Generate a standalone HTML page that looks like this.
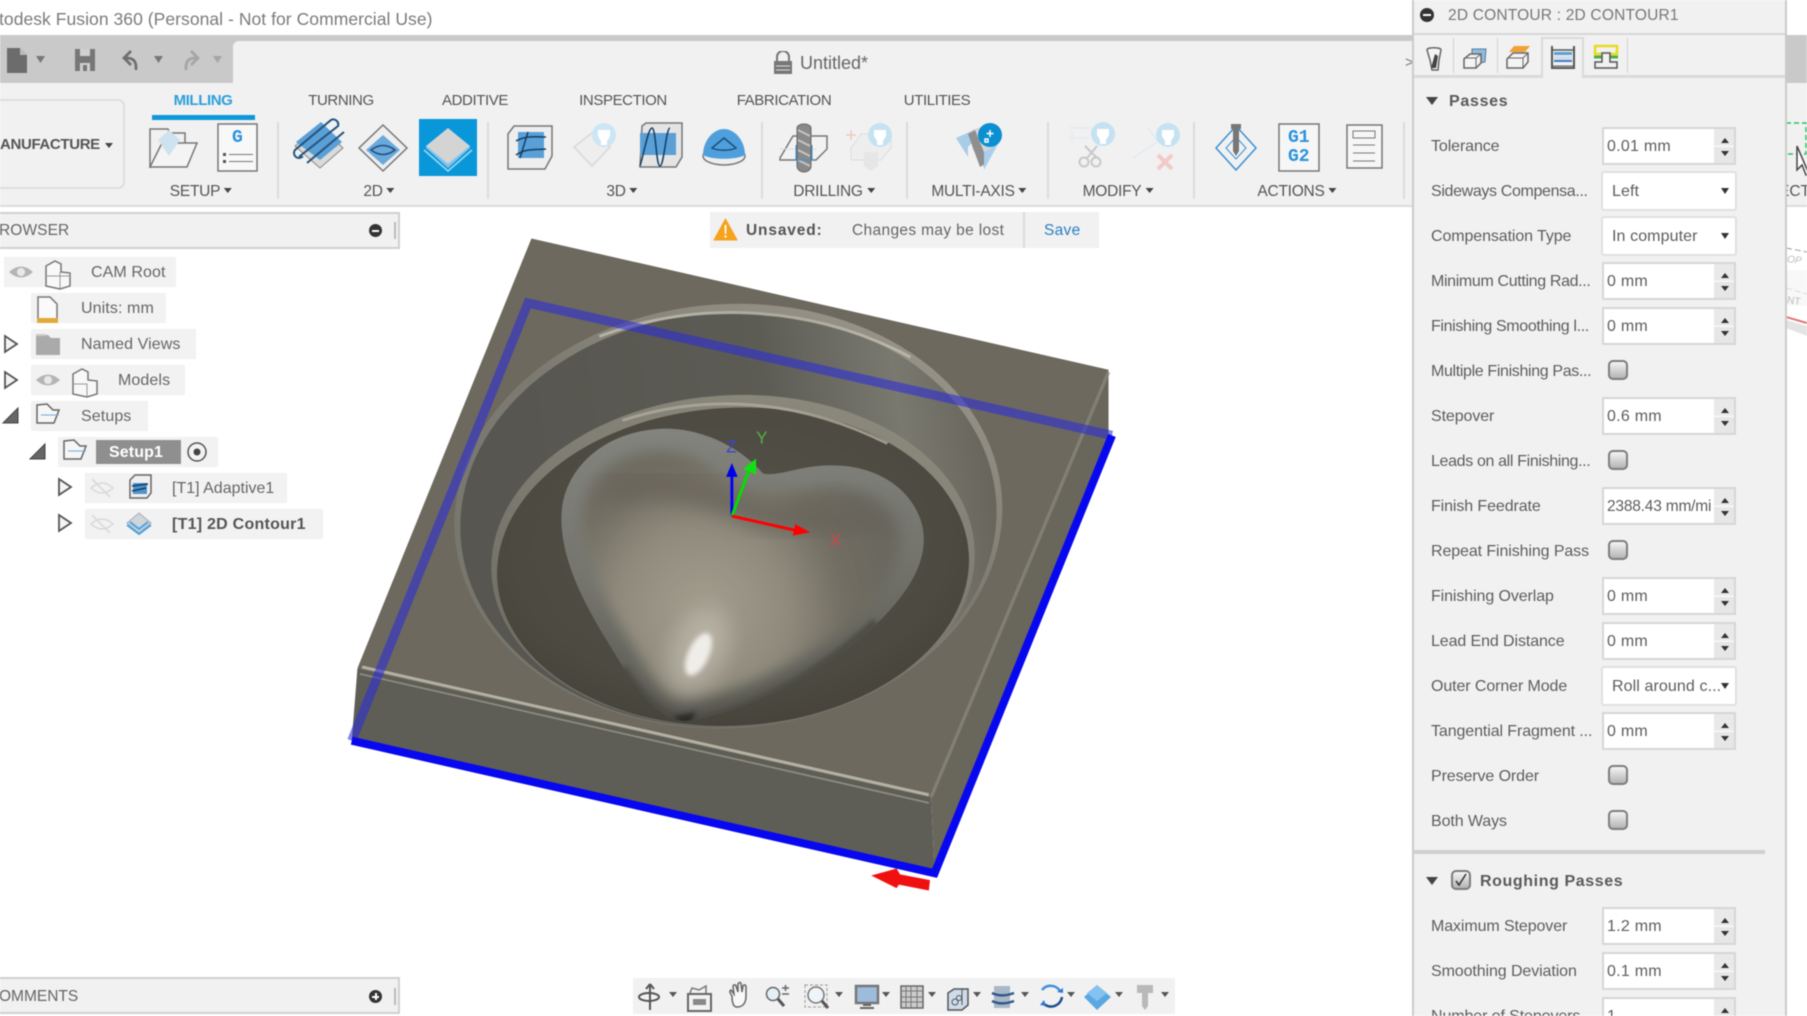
<!DOCTYPE html>
<html><head><meta charset="utf-8"><title>Fusion 360</title>
<style>
html,body{margin:0;padding:0;background:#fff}
#r{position:relative;width:1807px;height:1016px;overflow:hidden;background:#fff;font-family:"Liberation Sans",sans-serif;color:#555;filter:blur(.45px)}
#r div,#r span,#r svg{position:absolute}
.t{white-space:nowrap;line-height:20px}
.tab{top:91px;font-size:15px;letter-spacing:-.4px;color:#555;white-space:nowrap;line-height:20px;transform:translateX(-50%)}
.grp{top:182px;font-size:15.5px;letter-spacing:-.25px;color:#555;white-space:nowrap;line-height:20px;transform:translateX(-50%)}
.grp:after{content:"";display:inline-block;border:4px solid transparent;border-top:5px solid #444;border-bottom:0;margin-left:4px;vertical-align:3px}
.sep{width:2px;top:122px;height:77px;background:#dcdcdc}
.l{left:1431px;font-size:16px;color:#5d5d5d;white-space:nowrap;line-height:20px;letter-spacing:-.1px}
.n{letter-spacing:-.35px}
.i{left:1602px;width:134px;height:38px;box-sizing:border-box;border:2px solid #d6d6d6;background:#fff;font-size:16px;line-height:35px;color:#5d5d5d;padding-left:3px;white-space:nowrap;overflow:hidden;letter-spacing:.25px}
.i b{position:absolute;right:0;top:0;width:20px;height:34px;background:linear-gradient(#e9e9e9 49%,#f8f8f8 49%,#f8f8f8 53%,#e6e6e6 53%)}
.i b:before{content:"";position:absolute;left:7px;top:9px;border:4px solid transparent;border-bottom:5px solid #333;border-top:0}
.i b:after{content:"";position:absolute;left:7px;top:22px;border:4px solid transparent;border-top:5px solid #333;border-bottom:0}
.s{left:1601px;width:136px;height:40px;box-sizing:border-box;border:2px solid #e0e0e0;border-radius:3px;background:#fff;font-size:16px;line-height:37px;color:#5d5d5d;padding-left:9px;white-space:nowrap;letter-spacing:.1px}
.s:after{content:"";position:absolute;right:6px;top:15px;border:4.5px solid transparent;border-top:6px solid #333;border-bottom:0}
.c{left:1608px;width:20px;height:20px;box-sizing:border-box;border:2px solid #7d7d7d;border-radius:5px;background:linear-gradient(#f4f4f4,#b4b4b4)}
.row{height:30px;background:#f2f2f2}
.tt{font-size:16px;color:#666;line-height:20px;white-space:nowrap;letter-spacing:.1px}
.a{width:0;height:0;border:5px solid transparent;border-top:7px solid #666;border-bottom:0}
</style></head><body><div id="r">

<!-- title -->
<div class="t" style="left:-1px;top:9px;font-size:17.5px;color:#7b7b7b;letter-spacing:.05px">todesk Fusion 360 (Personal - Not for Commercial Use)</div>
<div style="left:0;top:35px;width:1807px;height:48px;background:#c9c9c9"></div>
<div style="left:233px;top:41px;width:1180px;height:42px;background:#f1f1f1;border-radius:6px 0 0 0"></div>
<div style="left:0;top:83px;width:1807px;height:122px;background:#f1f1f1"></div>
<div style="left:0;top:205px;width:1807px;height:2px;background:#dcdcdc"></div>

<!-- quick access -->
<svg style="left:0;top:42px" width="234" height="40" viewBox="0 0 234 40">
<path d="M7 6h13l7 7v18H7z" fill="#6c6c6c"/><path d="M20 6v7h7" fill="#bbb"/>
<path d="M36 14h9l-4.500 7z" fill="#777"/>
<path d="M75 7h20v22H75z" fill="#777"/><path d="M80 7h10v7H80zM80 21h10v8H80z" fill="#d0d0d0"/><path d="M83 23h4v6h-4z" fill="#777"/>
<path d="M136 28v-3c0-7-4-9-10-9m5-7-7 7 7 7" fill="none" stroke="#707070" stroke-width="2.800"/>
<path d="M154 14h9l-4.500 7z" fill="#777"/>
<path d="M186 28v-3c0-7 4-9 10-9m-5-7 7 7-7 7" fill="none" stroke="#a5a5a5" stroke-width="2.800"/>
<path d="M213 14h9l-4.500 7z" fill="#a5a5a5"/></svg>

<svg style="left:772px;top:51px" width="22" height="24" viewBox="0 0 22 24"><path d="M5 10V6a6 6 0 0 1 12 0v4" fill="none" stroke="#777" stroke-width="2"/><path d="M2 10h18v13H2z" fill="#777"/><path d="M4 15h14M4 19h14" stroke="#ddd"/></svg>
<div class="t" style="left:800px;top:53px;font-size:18px;color:#666">Untitled*</div>
<div class="t" style="left:1405px;top:53px;font-size:15px;color:#777">&gt;</div>

<!-- manufacture -->
<div style="left:-10px;top:99px;width:135px;height:90px;border:2px solid #dedede;border-radius:7px;box-sizing:border-box"></div>
<div class="t" style="left:0;top:135px;font-size:15px;font-weight:bold;color:#555;letter-spacing:-.35px">ANUFACTURE</div>
<div style="left:105px;top:143px;border:4px solid transparent;border-top:5px solid #444;border-bottom:0;width:0;height:0"></div>

<!-- tabs -->
<div class="tab" style="left:203px;color:#2d9fdb;font-weight:bold">MILLING</div>
<div style="left:152px;top:115px;width:103px;height:5px;background:#0d98da"></div>
<div class="tab" style="left:341px">TURNING</div>
<div class="tab" style="left:475px">ADDITIVE</div>
<div class="tab" style="left:623px">INSPECTION</div>
<div class="tab" style="left:784px">FABRICATION</div>
<div class="tab" style="left:937px">UTILITIES</div>

<div class="sep" style="left:277px"></div><div class="sep" style="left:487px"></div><div class="sep" style="left:761px"></div><div class="sep" style="left:906px"></div><div class="sep" style="left:1047px"></div><div class="sep" style="left:1193px"></div><div class="sep" style="left:1403px"></div>

<div style="left:419px;top:119px;width:58px;height:57px;background:#0a97d9"></div>

<!-- toolbar icons -->
<svg style="left:0;top:110px" width="1410" height="75" viewBox="0 110 1410 75" fill="none">
<!-- folder -->
<path d="M150 168v-39h18l2 4h15v12" stroke="#777" stroke-width="1.500"/><path d="M150 167l12-24h35l-10 24z" stroke="#777" stroke-width="1.500" fill="#f4f4f4"/><path d="M158 140l11-10 11 10-11 16z" fill="#cfe2ef"/>
<!-- G doc -->
<path d="M218 124h39v47h-39z" stroke="#777" stroke-width="1.500" fill="#f8f8f8"/><path d="M223 153h3v3h-3zM223 160h3v3h-3z" fill="#555"/><path d="M229 154.500h24M229 161.500h24" stroke="#777"/>
<!-- adaptive -->
<path d="M295 146l25-20 23 22-23 20z" fill="#dadada" stroke="#888"/><path d="M296 142l25-20 21 20-22 18z" fill="#5a9fd6"/><path d="M300 156l38-30a5 5 0 0 0-7-6l-36 30a5 5 0 0 0 7 7zM307 163l37-31" stroke="#24547e" stroke-width="2"/>
<!-- pocket -->
<path d="M383 125l24 23-24 23-24-23z" fill="#eee" stroke="#777" stroke-width="1.500"/><path d="M383 135l17 15-17 15-17-15z" fill="#6aa9dc"/><path d="M371 150q12-9 24 0q-12 9-24 0z" stroke="#1f4e7a" stroke-width="1.500"/>
<!-- active contour -->
<path d="M424 150l24 21 24-21" stroke="#9fd8f6" stroke-width="1.500"/><path d="M426 146l22 18 22-18v2l-22 20-22-20z" fill="#79c6ef"/><path d="M448 128l22 18-22 18-22-18z" fill="#d4d4d4"/>
<!-- 3d adaptive -->
<path d="M508 134l6-8h38v30l-7 13h-37z" fill="#eee" stroke="#777" stroke-width="1.500"/><path d="M518 132h26v26h-26z" fill="#5a9fd6"/><path d="M516 141c10-6 22-4 30-4M516 155c10-7 20-5 30-6M528 132l-8 26" stroke="#123f66" stroke-width="1.500"/>
<!-- ghost -->
<path d="M574 147l18-14 18 14-18 19z" fill="#eee" stroke="#ddd" stroke-width="2"/><circle cx="604" cy="135" r="12" fill="#cde6f5"/><path d="M598 130h12v6l-3 5v4h-6v-4l-3-5z" fill="#fff"/>
<!-- 3d parallel -->
<path d="M642 126l4-3h36v34l-6 10h-36z" fill="#e4e4e4" stroke="#777" stroke-width="1.500"/><path d="M640 133h36v22h-36z" fill="#5a9fd6"/><path d="M640 166c4-12 8-38 12-38s4 38 8 38 6-38 10-38" stroke="#123f66" stroke-width="1.500"/>
<!-- 3d cone -->
<ellipse cx="724" cy="156" rx="21" ry="9" fill="#eee" stroke="#777" stroke-width="1.500"/><path d="M703 155c0-14 10-26 21-26s21 12 21 26c-8 5-34 5-42 0z" fill="#4f9fdc"/><path d="M712 148l12-10 12 10c-6 3-18 3-24 0z" stroke="#17507f" stroke-width="1.500"/>
<!-- drilling -->
<path d="M780 158l13-22h34v13l-11 11h-36z" fill="#f2f2f2" stroke="#777" stroke-width="1.500"/><path d="M780 149h36" stroke="#ddd"/><path d="M797 128a7 4 0 0 1 14 0v38a7 6 0 0 1-14 0z" fill="#8a8a8a" stroke="#666"/>
<path d="M798 130l12 6M798 140l12 6M798 150l12 6M798 160l12 6" stroke="#c4c4c4" stroke-width="2"/><path d="M796 145v15h16v-15" stroke="#3a91d5"/>
<!-- ghost drill -->
<path d="M851 148l10-14h30v14l-10 12h-30z" fill="#eee" stroke="#ddd"/><path d="M851 130v10M846 135h10" stroke="#f0c8c4" stroke-width="1.500"/><path d="M864 152h14v14l-7 5-7-5z" fill="#e6e6e6"/><circle cx="880" cy="135" r="12" fill="#c5e2f3"/><path d="M874 130h12v6l-3 5v4h-6v-4l-3-5z" fill="#fff"/>
<!-- multi axis -->
<path d="M956 138l20-9v10l-8 8v10z" fill="#a8cde8"/><path d="M972 130l12-4 12 20-12 22-12-20z" fill="#d6d6d6"/><path d="M968 134l7-4 13 32-8 5z" fill="#8f8f8f"/><path d="M984 152l14-8-14 26z" fill="#a9cfee"/><circle cx="990" cy="135" r="12" fill="#0a8fd3"/><path d="M990 130v7M986.500 133.500h7M985 139h3v3h-3z" stroke="#fff" stroke-width="1.500"/>
<!-- modify -->
<path d="M1069 128h28M1069 138h20M1072 132v10" stroke="#e0e8ee"/><path d="M1085 146l12 12M1097 146l-10 12" stroke="#c8c8c8" stroke-width="2"/><circle cx="1084" cy="162" r="4.500" stroke="#c8c8c8" stroke-width="2"/><circle cx="1096" cy="162" r="4.500" stroke="#c8c8c8" stroke-width="2"/><circle cx="1103" cy="134" r="12" fill="#c5e2f3"/><path d="M1097 129h12v6l-3 5v4h-6v-4l-3-5z" fill="#fff"/>
<path d="M1133 158l30-20M1148 128l10 14" stroke="#d8e8f2"/><path d="M1158 155l14 14M1172 155l-14 14" stroke="#f2c9c6" stroke-width="4"/><circle cx="1168" cy="135" r="12" fill="#c5e2f3"/><path d="M1162 130h12v6l-3 5v4h-6v-4l-3-5z" fill="#fff"/>
<!-- actions -->
<path d="M1236 126l20 22-20 22-20-22z" stroke="#3a91d5" stroke-width="1.500"/><path d="M1236 137l10 11-10 11-10-11z" stroke="#3a91d5"/><path d="M1231 124h10v5h-2v22l-3 5-3-5v-22h-2z" fill="#777"/>
<path d="M1279 124h40v47h-40z" fill="#f6f6f6" stroke="#777" stroke-width="1.500"/>
<path d="M1347 125h35v43h-35z" fill="#f6f6f6" stroke="#777" stroke-width="1.500"/><path d="M1353 131h22v7h-22zM1353 145h22M1353 153h22M1353 161h22" stroke="#777"/>
</svg>
<div class="t" style="left:232px;top:128px;font-size:18px;font-weight:bold;color:#2b93db;font-family:'Liberation Mono',monospace">G</div>
<div class="t" style="left:1288px;top:129px;font-size:18px;font-weight:bold;color:#2b93db;line-height:19px;font-family:'Liberation Mono',monospace;white-space:normal;width:24px">G1 G2</div>

<div class="grp" style="left:201px">SETUP</div>
<div class="grp" style="left:379px">2D</div>
<div class="grp" style="left:622px">3D</div>
<div class="grp" style="left:834px">DRILLING</div>
<div class="grp" style="left:979px">MULTI-AXIS</div>
<div class="grp" style="left:1118px">MODIFY</div>
<div class="grp" style="left:1297px">ACTIONS</div>

<!-- browser -->
<div style="left:-2px;top:212px;width:402px;height:37px;background:#f1f1f1;border:2px solid #d0d0d0;box-sizing:border-box"></div>
<div class="t" style="left:-1px;top:221px;font-size:15.5px;color:#666;letter-spacing:.1px">ROWSER</div>
<div style="left:369px;top:224px;width:13px;height:13px;border-radius:50%;background:#333"></div><div style="left:372px;top:230px;width:7px;height:2px;background:#fff"></div>
<div style="left:394px;top:222px;width:2px;height:17px;background:#bbb"></div>

<!-- tree -->
<div class="row" style="left:4px;top:257px;width:172px"></div>
<div class="row" style="left:31px;top:293px;width:135px"></div>
<div class="row" style="left:31px;top:329px;width:165px"></div>
<div class="row" style="left:31px;top:365px;width:154px"></div>
<div class="row" style="left:31px;top:401px;width:117px"></div>
<div class="row" style="left:58px;top:437px;width:160px"></div>
<div class="row" style="left:85px;top:473px;width:202px"></div>
<div class="row" style="left:85px;top:509px;width:238px"></div>
<div style="left:96px;top:440px;width:85px;height:24px;background:#8f8f8f"></div>

<svg style="left:0;top:250px" width="330" height="290" viewBox="0 250 330 290" fill="none">
<path d="M9 272q12-11 24 0q-12 11-24 0z" fill="#b5b5b5"/><circle cx="21" cy="272" r="4" fill="#e8e8e8"/>
<path id="b1" d="M46 266l9-5 6 3v8l9 1v13l-10 3-14-3z" stroke="#777" stroke-width="1.500" fill="#f8f8f8"/><path d="M46 276h14v12M60 272v4l10 0" stroke="#999"/>
<path d="M38 297h12l7 7v17H38z" stroke="#777" stroke-width="1.500" fill="#fafafa"/><path d="M37 318h21v5H37z" fill="#e2a93a"/>
<path d="M36 335h12l3 3h9v17H36z" fill="#aaa"/><path d="M36 334h10v2H36z" fill="#ccc"/>
<path d="M5 336l12 8-12 8z" stroke="#555" stroke-width="1.800" fill="#f4f4f4"/>
<path d="M5 372l12 8-12 8z" stroke="#555" stroke-width="1.800" fill="#f4f4f4"/>
<path d="M36 380q12-11 24 0q-12 11-24 0z" fill="#b5b5b5"/><circle cx="48" cy="380" r="4" fill="#e8e8e8"/>
<path d="M73 374l9-5 6 3v8l9 1v13l-10 3-14-3z" stroke="#777" stroke-width="1.500" fill="#f8f8f8"/><path d="M73 384h14v12" stroke="#999"/>
<path d="M3 423l15-15v15z" fill="#666" stroke="#444"/>
<path d="M37 405l10-1 6 6h6l-5 13H37z" stroke="#666" stroke-width="1.500" fill="#f6f6f6"/><path d="M41 415h18" stroke="#77a9d6"/>
<path d="M30 459l15-15v15z" fill="#666" stroke="#444"/>
<path d="M64 441l10-1 6 6h6l-5 13H64z" stroke="#666" stroke-width="1.500" fill="#f6f6f6"/><path d="M68 451h18" stroke="#77a9d6"/>
<circle cx="197" cy="452" r="9" stroke="#555" stroke-width="1.500"/><circle cx="197" cy="452" r="3.500" fill="#444"/>
<path d="M59 479l12 8-12 8z" stroke="#555" stroke-width="1.800" fill="#f4f4f4"/>
<path d="M59 515l12 8-12 8z" stroke="#555" stroke-width="1.800" fill="#f4f4f4"/>
<path d="M91 488q11-10 22 0q-11 10-22 0zM92 479l18 18" stroke="#d8d8d8" stroke-width="1.500"/>
<path d="M91 524q11-10 22 0q-11 10-22 0zM92 515l18 18" stroke="#d8d8d8" stroke-width="1.500"/>
<path d="M130 480l5-5h16v18l-4 5h-17z" stroke="#666" stroke-width="1.500" fill="#f0f0f0"/><path d="M133 483h14v11h-14z" fill="#4f94cc"/><path d="M132 486l16-2M132 491l14-3" stroke="#123f66" stroke-width="1.500"/>
<path d="M139 513l12 10-12 10-12-10z" fill="#cfd6da" stroke="#aab"/><path d="M127 525l12 9 12-9" stroke="#49a3e0" stroke-width="2"/><path d="M130 522l9 7 9-7" stroke="#49a3e0" stroke-width="2"/>
</svg>
<div class="tt" style="left:91px;top:263px">CAM Root</div>
<div class="tt" style="left:81px;top:299px">Units: mm</div>
<div class="tt" style="left:81px;top:335px">Named Views</div>
<div class="tt" style="left:118px;top:371px">Models</div>
<div class="tt" style="left:81px;top:407px">Setups</div>
<div class="tt" style="left:109px;top:443px;color:#fff;font-weight:bold">Setup1</div>
<div class="tt" style="left:172px;top:479px;letter-spacing:0">[T1] Adaptive1</div>
<div class="tt" style="left:172px;top:515px;font-weight:bold;color:#555;letter-spacing:.25px">[T1] 2D Contour1</div>

<!-- unsaved -->
<div style="left:710px;top:212px;width:389px;height:36px;background:#f1f1f1"></div>
<svg style="left:713px;top:217px" width="25" height="25" viewBox="0 0 25 25"><path d="M12.500 2L24 23H1z" fill="#f5a31d" stroke="#f5a31d" stroke-linejoin="round"/><path d="M11.500 8h2l-.3 9h-1.400zM11.500 18.500h2v2h-2z" fill="#fff"/></svg>
<div class="t" style="left:746px;top:221px;font-size:15.5px;font-weight:bold;color:#555;letter-spacing:.85px">Unsaved:</div>
<div class="t" style="left:852px;top:221px;font-size:15.5px;color:#666;letter-spacing:.35px">Changes may be lost</div>
<div style="left:1023px;top:212px;width:2px;height:36px;background:#dcdcdc"></div>
<div class="t" style="left:1044px;top:221px;font-size:15.5px;color:#2b7fbf;letter-spacing:.3px">Save</div>

<!-- model -->
<svg style="left:0;top:0" width="1807" height="1016" viewBox="0 0 1568 882">
<defs>
<linearGradient id="wall" x1="0.1" y1="0.4" x2="1" y2="0.35"><stop offset="0" stop-color="#575650"/><stop offset=".55" stop-color="#5c5c55"/><stop offset=".82" stop-color="#7a7970"/><stop offset="1" stop-color="#66645b"/></linearGradient>
<linearGradient id="rim" x1="0.1" y1="0.8" x2="0.75" y2="0"><stop offset="0" stop-color="#77766c"/><stop offset=".55" stop-color="#7d7b71"/><stop offset="1" stop-color="#98948a"/></linearGradient>
<linearGradient id="led" x1="0" y1="1" x2="0.6" y2="0"><stop offset="0" stop-color="#696860"/><stop offset="1" stop-color="#8a877b"/></linearGradient>
<radialGradient id="floor" cx=".5" cy=".42" r=".62"><stop offset="0" stop-color="#55524a"/><stop offset=".75" stop-color="#4d4a41"/><stop offset="1" stop-color="#44423a"/></radialGradient>
<radialGradient id="hg" gradientUnits="userSpaceOnUse" cx="610" cy="530" r="165"><stop offset="0" stop-color="#a49e8f"/><stop offset=".45" stop-color="#8f8a7c"/><stop offset=".75" stop-color="#716d62"/><stop offset="1" stop-color="#6a685f"/></radialGradient>
<linearGradient id="he" gradientUnits="userSpaceOnUse" x1="600" y1="370" x2="620" y2="630"><stop offset="0" stop-color="#82847d"/><stop offset=".5" stop-color="#74746d"/><stop offset="1" stop-color="#55544d"/></linearGradient>
<filter id="b1" x="-5%" y="-5%" width="110%" height="110%"><feGaussianBlur stdDeviation="1.300"/></filter>
<filter id="b2" x="-20%" y="-20%" width="140%" height="140%"><feGaussianBlur stdDeviation="2"/></filter>
<filter id="b5" x="-30%" y="-30%" width="160%" height="160%"><feGaussianBlur stdDeviation="6"/></filter>
<filter id="b9" x="-30%" y="-30%" width="160%" height="160%"><feGaussianBlur stdDeviation="9"/></filter>
<clipPath id="hc"><path d="M662 411C640 385 600 368 565 373C520 378 487 410 487 450C487 490 510 530 535 570C552 598 572 626 595 626C640 620 720 585 770 532C795 505 806 480 800 455C790 420 755 403 720 404C695 404 675 414 662 411Z"/></clipPath>
<clipPath id="top"><path d="M461 207L962 321L808 692L310 580Z"/></clipPath>
</defs>
<path d="M310 580L808 692L811 758L305 643Z" fill="#5e5e56"/>
<path d="M962 321L962 378L811 758L808 692Z" fill="#69665c"/>
<path d="M461 207L962 321L808 692L310 580Z" fill="#6e695e"/>
<g clip-path="url(#top)">
<g filter="url(#b1)">
<ellipse cx="632" cy="448" rx="238" ry="184" fill="url(#rim)" transform="rotate(-4 632 448)"/>
<ellipse cx="632" cy="451" rx="233" ry="180" fill="url(#wall)" transform="rotate(-4 632 451)"/>
<ellipse cx="636" cy="487" rx="210" ry="144" fill="url(#led)" transform="rotate(-3 636 487)"/>
<ellipse cx="636" cy="492" rx="205" ry="138" fill="url(#floor)" transform="rotate(-3 636 492)"/>
</g>
<path d="M520 292C600 262 700 262 790 310" stroke="#c2beb0" stroke-width="2.500" fill="none" filter="url(#b1)" opacity=".8"/>
<path d="M540 365C610 342 690 345 770 385" stroke="#b0ac9f" stroke-width="2.500" fill="none" filter="url(#b1)" opacity=".8"/>
</g>
<path d="M314 579L806 690" stroke="#b5b2a4" stroke-width="2.500" filter="url(#b1)"/>
<path d="M312 585L806 697" stroke="#8f8c80" stroke-width="1.500" filter="url(#b1)"/>
<path d="M808 692L962 323" stroke="#8a877b" stroke-width="3" opacity=".7"/>
<!-- heart -->
<path d="M662 411C640 385 600 368 565 373C520 378 487 410 487 450C487 490 510 530 535 570C552 598 572 626 595 626C640 620 720 585 770 532C795 505 806 480 800 455C790 420 755 403 720 404C695 404 675 414 662 411Z" fill="url(#he)"/>
<g clip-path="url(#hc)">
<path d="M640 425C610 398 590 390 565 392C528 396 506 420 506 450C506 490 530 530 552 565C565 590 580 610 598 608C650 600 715 565 755 525C778 500 785 480 780 462C772 435 745 422 720 424C695 424 670 440 640 425Z" fill="url(#hg)" filter="url(#b5)"/>
<path d="M530 430C565 410 620 430 660 447C700 455 740 443 772 457" stroke="#68645a" stroke-width="22" fill="none" filter="url(#b9)" opacity=".8"/>
<ellipse cx="606" cy="565" rx="24" ry="38" transform="rotate(25 606 565)" fill="#c8c4b8" filter="url(#b9)" opacity=".55"/>
<ellipse cx="606" cy="568" rx="9" ry="20" transform="rotate(25 606 568)" fill="#efede7" filter="url(#b2)"/>
<path d="M540 580C560 610 580 625 596 626C640 620 700 595 760 540" stroke="#4e4d46" stroke-width="8" fill="none" filter="url(#b2)"/>
<path d="M596 634l-12-12 20-4z" fill="#2d2b27" filter="url(#b2)"/>
</g>
<!-- blue frame -->
<path d="M305 643L458 263L965 378" fill="none" stroke="#2c2cd8" stroke-opacity=".58" stroke-width="8"/>
<path d="M305 643L811 758L965 378" fill="none" stroke="#0808f0" stroke-width="7"/>
<!-- axes -->
<path d="M635 448v-38" stroke="#0000ff" stroke-width="2.500"/><path d="M630 414l5-12 5 12z" fill="#0000e8"/>
<path d="M635 448l15-40" stroke="#00e000" stroke-width="2.500"/><path d="M645 407l11-9 0 14z" fill="#10e010"/>
<path d="M635 448l58 13" stroke="#ff0000" stroke-width="2.500"/><path d="M690 455l13 7-15 3z" fill="#f00"/>
<text x="630" y="393" font-family="Liberation Sans" font-size="15" fill="#3a46c8">Z</text>
<text x="656" y="385" font-family="Liberation Sans" font-size="15" fill="#55b045">Y</text>
<text x="720" y="474" font-family="Liberation Sans" font-size="15" fill="#c8484a">X</text>
<path d="M756 760l22-6 3 5 26 5-1 9-26-5-2 3z" fill="#f01010"/>
</svg>

<!-- comments -->
<div style="left:-2px;top:977px;width:402px;height:37px;background:#f1f1f1;border:2px solid #d0d0d0;box-sizing:border-box"></div>
<div class="t" style="left:-1px;top:987px;font-size:15.5px;color:#666">OMMENTS</div>
<div style="left:369px;top:990px;width:13px;height:13px;border-radius:50%;background:#333"></div><div style="left:372px;top:996px;width:7px;height:2px;background:#fff"></div><div style="left:374.500px;top:993px;width:2px;height:7px;background:#fff"></div>
<div style="left:394px;top:988px;width:2px;height:17px;background:#bbb"></div>

<!-- bottom bar -->
<div style="left:633px;top:978px;width:542px;height:36px;background:#f1f1f1"></div>
<svg style="left:633px;top:978px" width="545" height="36" viewBox="633 978 545 36" fill="none">
<path d="M650 984v26M650 984l-4 5M650 984l4 5" stroke="#555" stroke-width="2"/><ellipse cx="649" cy="997" rx="10" ry="4" stroke="#555" stroke-width="2"/>
<path d="M669 992h8l-4 5z" fill="#555"/>
<path d="M688 994h23v17h-23z" fill="#f2f2f2" stroke="#666" stroke-width="2"/><path d="M693 999h13v6h-13z" fill="#888"/><path d="M690 993l2-5 7 2 7-4v7" stroke="#777" stroke-width="1.500"/>
<path d="M732 996c-2-3-3-5-1-6l3 4-1-8c1-2 3-1 3 0l2 6v-8c1-2 3-2 3 0l1 8 1-6c1-2 3-1 3 1l0 9c0 8-4 11-9 11-4 0-5-5-5-11z" stroke="#666" stroke-width="1.500" fill="#f8f8f8"/>
<circle cx="773" cy="994" r="6.500" stroke="#666" stroke-width="1.500" fill="#e4eff6"/><path d="M778 999l6 7" stroke="#555" stroke-width="3"/><path d="M782 988h7M785.500 985v6M782 994h7" stroke="#666" stroke-width="1.500"/>
<path d="M805 985h22v22h-22z" stroke="#999" stroke-dasharray="3 2"/><circle cx="816" cy="995" r="8" stroke="#777" stroke-width="1.500" fill="#eef4f8"/><path d="M822 1001l6 7" stroke="#555" stroke-width="3"/>
<path d="M835 992h8l-4 5z" fill="#555"/>
<path d="M856 986h22v17h-22z" fill="#9dbcdc" stroke="#777" stroke-width="2.500"/><path d="M863 1005h8M860 1008h14" stroke="#666" stroke-width="2"/>
<path d="M882 992h8l-4 5z" fill="#555"/>
<path d="M901 986h22v22h-22z" fill="#ccc" stroke="#666" stroke-width="1.500"/><path d="M906 986v22M911 986v22M917 986v22M901 991h22M901 997h22M901 1002h22" stroke="#777"/>
<path d="M928 992h8l-4 5z" fill="#555"/>
<path d="M948 993l6-4h14v16l-6 5h-14z" fill="#cddbeb" stroke="#555" stroke-width="1.500"/><path d="M962 989v16" stroke="#555"/><circle cx="955" cy="1002" r="3" stroke="#555"/><circle cx="959" cy="998" r="2.500" stroke="#555"/>
<path d="M973 992h8l-4 5z" fill="#555"/>
<path d="M994 986h16v22h-16z" fill="#a9b8c8"/><path d="M992 993c6 3 14 3 22 0M992 1001c6 3 14 3 22 0" stroke="#33598a" stroke-width="2.500"/>
<path d="M1021 992h8l-4 5z" fill="#555"/>
<path d="M1042 990a11 11 0 0 1 18 1" stroke="#3d8ddf" stroke-width="2.500"/><path d="M1062 997a11 11 0 0 1-19 6" stroke="#1f4f8f" stroke-width="2.500"/><path d="M1057 992l6 1 0-5zM1044 1000l-4 5 6 1z" fill="#2f7ad0"/>
<path d="M1067 992h8l-4 5z" fill="#555"/>
<path d="M1097 985l14 12-14 13-13-13z" fill="#5aa8e3"/><path d="M1097 985l10 8-10 8-10-8z" fill="#86c2ef"/>
<path d="M1115 992h8l-4 5z" fill="#555"/>
<path d="M1137 985h16v8h-5v13l-3 4-3-4v-13h-5z" fill="#b9b9b9"/>
<path d="M1161 992h8l-4 5z" fill="#555"/>
</svg>

<!-- right of panel -->
<svg style="left:1786px;top:110px" width="21" height="240" viewBox="0 0 21 240" fill="none">
<path d="M0 13h20v31H0" stroke="#27c45f" stroke-width="1.500" stroke-dasharray="5 3"/>
<path d="M11 36l0 24 5-5 4 10 3-1z" fill="#fff" stroke="#444" stroke-width="1.500"/>
<path d="M0 138l21 4M0 178l21 6" stroke="#999" stroke-dasharray="6 3"/>
<path d="M0 160h21v36H0z" fill="#f5f5f5" opacity=".7"/>
<path d="M0 207l21 6" stroke="#e0757a" stroke-width="2"/><path d="M0 210l21 6v10l-21-8z" fill="#e4e4e4"/>
</svg>
<div class="t" style="left:1779px;top:182px;font-size:15.5px;color:#555">ECT</div>
<div class="t" style="left:1787px;top:251px;font-size:10px;color:#bbb;transform:rotate(8deg);font-style:italic">OP</div>
<div class="t" style="left:1787px;top:292px;font-size:10px;color:#bbb;transform:rotate(8deg)">NT</div>

<!-- panel -->
<div style="left:1412px;top:0;width:375px;height:1016px;box-sizing:border-box;background:#f1f1f1;border-left:2px solid #cbcbcb;border-right:2px solid #cbcbcb"></div>
<div style="left:1414px;top:33px;width:371px;height:2px;background:#d6d6d6"></div>
<div style="left:1414px;top:75px;width:371px;height:3px;background:#dadada"></div>
<div style="left:1541px;top:37px;width:43px;height:41px;box-sizing:border-box;background:#f1f1f1;border:2px solid #dadada;border-bottom:0"></div>
<div style="left:1453px;top:38px;width:1px;height:35px;background:#d2d2d2"></div><div style="left:1497px;top:38px;width:1px;height:35px;background:#d2d2d2"></div><div style="left:1627px;top:38px;width:1px;height:35px;background:#d2d2d2"></div>
<div style="left:1420px;top:8px;width:14px;height:14px;border-radius:50%;background:#333"></div><div style="left:1423px;top:14px;width:8px;height:2px;background:#fff"></div>
<div class="t" style="left:1448px;top:6px;font-size:15.5px;color:#777;letter-spacing:.2px">2D CONTOUR : 2D CONTOUR1</div>

<svg style="left:1420px;top:40px" width="215" height="34" viewBox="1420 40 215 34" fill="none">
<path d="M1427 50c0-3 14-3 14 0l-2 10-1 10h-6l-2-10z" fill="#f4f4f4" stroke="#666" stroke-width="1.500"/><path d="M1431 68l4-14 3 2-2 12z" fill="#444"/>
<path d="M1472 49h14l-1 13-5 1v-8h-8z" fill="#8ebce0" stroke="#5a7a96" stroke-width="1"/><path d="M1464 68v-9l6-5h11v9l-5 5z" fill="#f4f4f4" stroke="#666" stroke-width="1.500"/><path d="M1464 58h12v10M1476 58l5-4" stroke="#666"/>
<path d="M1507 68v-9l6-6h15v9l-5 6z" fill="#f4f4f4" stroke="#666" stroke-width="1.500"/><path d="M1507 58h16v10M1523 58l5-5" stroke="#666"/><path d="M1509 52l5-6h16l-5 6z" fill="#f0a235"/>
<path d="M1552 46v22h22V46" stroke="#555" stroke-width="2"/><path d="M1553 50h20" stroke="#555" stroke-width="1.500"/><path d="M1554 52h18v3h-18z" fill="#5a9fd6"/><path d="M1554 56h18v5h-18z" fill="#d4dde6"/><path d="M1554 61h18" stroke="#3c7fd0" stroke-width="2"/><path d="M1552 66h22" stroke="#555"/>
<path d="M1595 46h22v8h-22z" stroke="#e6dc1f" stroke-width="2.500"/><path d="M1594 57h24" stroke="#48b04c" stroke-width="3"/><path d="M1595 62h7v-9h8v9h7v6h-22z" stroke="#555" stroke-width="1.500" fill="#f1f1f1"/>
</svg>

<div style="left:1426px;top:97px;border:6.500px solid transparent;border-top:8px solid #444;border-bottom:0;width:0;height:0"></div>
<div class="t" style="left:1449px;top:92px;font-size:16px;font-weight:bold;color:#5a5a5a;letter-spacing:.7px">Passes</div>

<div class="l" style="top:137px">Tolerance</div><div class="i" style="top:127px">0.01 mm<b></b></div>
<div class="l n" style="top:182px">Sideways Compensa...</div><div class="s" style="top:171px">Left</div>
<div class="l" style="top:227px">Compensation Type</div><div class="s" style="top:216px">In computer</div>
<div class="l n" style="top:272px">Minimum Cutting Rad...</div><div class="i" style="top:262px">0 mm<b></b></div>
<div class="l n" style="top:317px">Finishing Smoothing l...</div><div class="i" style="top:307px">0 mm<b></b></div>
<div class="l n" style="top:362px">Multiple Finishing Pas...</div><div class="c" style="top:360px"></div>
<div class="l" style="top:407px">Stepover</div><div class="i" style="top:397px">0.6 mm<b></b></div>
<div class="l n" style="top:452px">Leads on all Finishing...</div><div class="c" style="top:450px"></div>
<div class="l" style="top:497px">Finish Feedrate</div><div class="i" style="top:487px;font-size:15.5px;letter-spacing:-.2px">2388.43 mm/mi<b></b></div>
<div class="l" style="top:542px">Repeat Finishing Pass</div><div class="c" style="top:540px"></div>
<div class="l" style="top:587px">Finishing Overlap</div><div class="i" style="top:577px">0 mm<b></b></div>
<div class="l" style="top:632px">Lead End Distance</div><div class="i" style="top:622px">0 mm<b></b></div>
<div class="l" style="top:677px">Outer Corner Mode</div><div class="s" style="top:666px">Roll around c...</div>
<div class="l" style="top:722px">Tangential Fragment ...</div><div class="i" style="top:712px">0 mm<b></b></div>
<div class="l" style="top:767px">Preserve Order</div><div class="c" style="top:765px"></div>
<div class="l" style="top:812px">Both Ways</div><div class="c" style="top:810px"></div>
<div style="left:1414px;top:850px;width:351px;height:4px;background:#d0d0d0"></div>
<div style="left:1426px;top:877px;border:6.500px solid transparent;border-top:8px solid #444;border-bottom:0;width:0;height:0"></div>
<div class="c" style="left:1451px;top:870px"></div>
<svg style="left:1453px;top:872px" width="16" height="16" viewBox="0 0 16 16" fill="none"><path d="M3 9l3 4 7-11" stroke="#333" stroke-width="1.500"/></svg>
<div class="t" style="left:1480px;top:872px;font-size:16px;font-weight:bold;color:#5a5a5a;letter-spacing:.6px">Roughing Passes</div>
<div class="l" style="top:917px">Maximum Stepover</div><div class="i" style="top:907px">1.2 mm<b></b></div>
<div class="l" style="top:962px">Smoothing Deviation</div><div class="i" style="top:952px">0.1 mm<b></b></div>
<div class="l" style="top:1007px">Number of Stepovers</div><div class="i" style="top:997px">1<b></b></div>
</div></body></html>
